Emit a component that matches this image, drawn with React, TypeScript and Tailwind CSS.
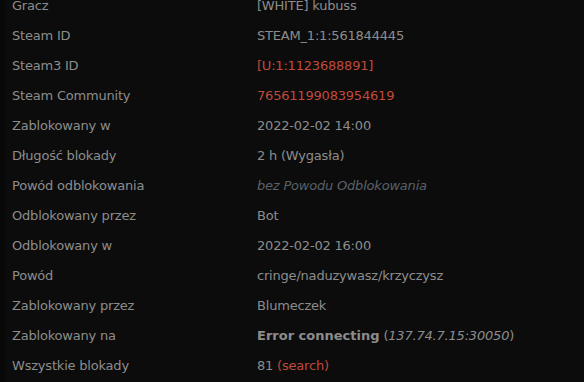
import React from 'react';

type Row = {
  label: string;
  value: React.ReactNode;
};

const red = 'text-[#c0493b]';

const rows: Row[] = [
  { label: 'Gracz', value: '[WHITE] kubuss' },
  { label: 'Steam ID', value: 'STEAM_1:1:561844445' },
  { label: 'Steam3 ID', value: <span className={red}>[U:1:1123688891]</span> },
  { label: 'Steam Community', value: <span className={red}>76561199083954619</span> },
  { label: 'Zablokowany w', value: '2022-02-02 14:00' },
  { label: 'Długość blokady', value: '2 h (Wygasła)' },
  {
    label: 'Powód odblokowania',
    value: <span className="italic text-[#5a6268]">bez Powodu Odblokowania</span>,
  },
  { label: 'Odblokowany przez', value: 'Bot' },
  { label: 'Odblokowany w', value: '2022-02-02 16:00' },
  { label: 'Powód', value: 'cringe/naduzywasz/krzyczysz' },
  { label: 'Zablokowany przez', value: 'Blumeczek' },
  {
    label: 'Zablokowany na',
    value: (
      <>
        <b className="font-bold tracking-normal">Error connecting</b> (<i>137.74.7.15:30050</i>)
      </>
    ),
  },
  {
    label: 'Wszystkie blokady',
    value: (
      <>
        81 <span className={red}>(search)</span>
      </>
    ),
  },
];

export default function App() {
  return (
    <div className="flex h-[382px] w-[584px] overflow-hidden bg-[#080808] font-['DejaVu_Sans',sans-serif] text-[13px] tracking-[-0.2px] text-[#8c8c8c]">
      {/* darker gutter on the left */}
      <div className="w-[5px] shrink-0" />
      <div className="flex-1 bg-[#0c0c0c]">
        <div className="-mt-[9px]">
          {rows.map((row, i) => (
            <div key={i} className="grid h-[30px] grid-cols-[240px_1fr] items-center">
              <div className="pl-[7px] whitespace-nowrap">{row.label}</div>
              <div className="pl-[12px] whitespace-nowrap">{row.value}</div>
            </div>
          ))}
        </div>
      </div>
    </div>
  );
}
